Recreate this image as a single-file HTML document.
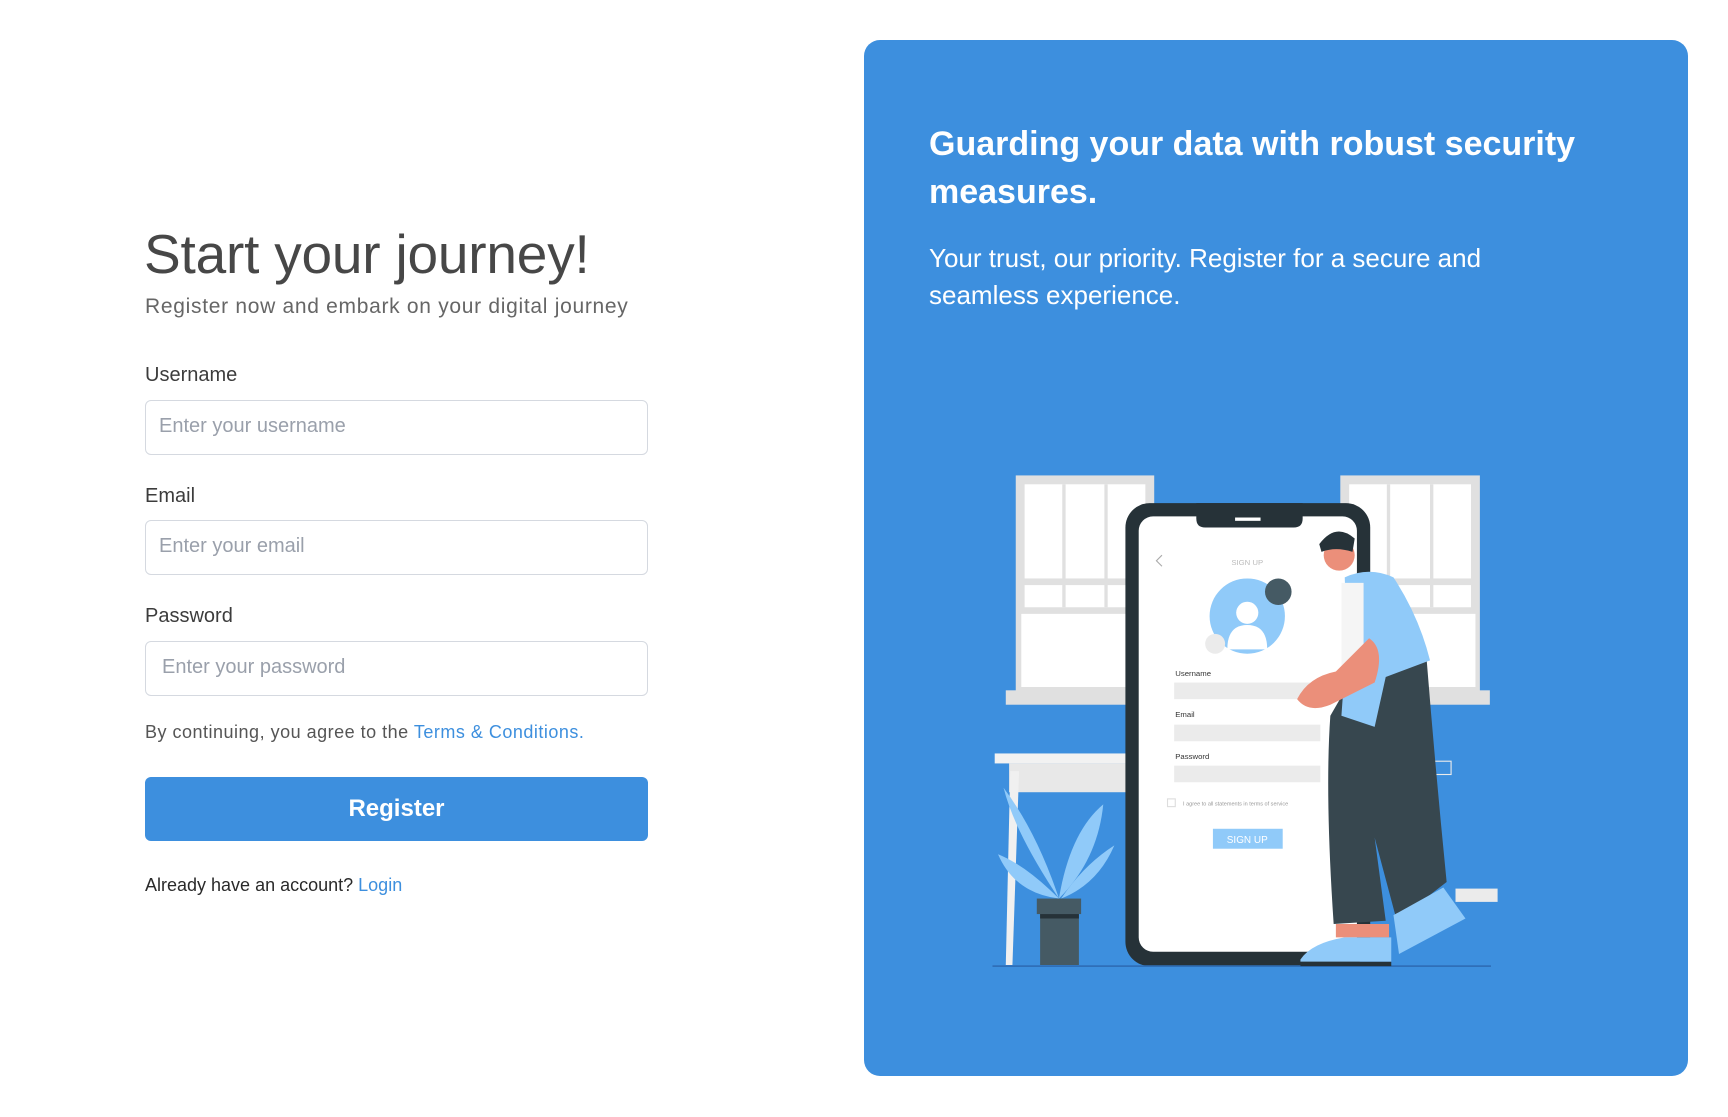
<!DOCTYPE html>
<html><head><meta charset="utf-8">
<style>
*{box-sizing:border-box;margin:0;padding:0}
body{width:1728px;height:1117px;background:#fff;font-family:"Liberation Sans",sans-serif;position:relative;overflow:hidden}
.a{position:absolute}
h1{position:absolute;left:144px;top:222px;font-size:55px;font-weight:400;color:#474747;letter-spacing:-0.2px}
.sub{left:145px;top:295px;font-size:21px;color:#666;letter-spacing:0.7px}
.lbl{left:145px;font-size:20px;color:#3c3c3c}
.inp{left:145px;width:503px;height:55px;border:1px solid #d5d9e0;border-radius:6px;font-size:20px;color:#9aa0ab;padding:14px 0 0 13px}
.terms{left:145px;top:722px;font-size:18px;color:#555;letter-spacing:0.5px}
.terms span,.log span{color:#3d8fde}
.btn{left:145px;top:777px;width:503px;height:64px;background:#3d8fde;border-radius:6px;color:#fff;font-size:24px;font-weight:700;text-align:center;line-height:64px}
.log{left:145px;top:875px;font-size:18px;color:#2a2a2a}
.panel{left:864px;top:40px;width:824px;height:1036px;background:#3d8fde;border-radius:16px}
.h2{left:929px;top:120px;width:700px;font-size:34px;font-weight:700;color:#fff;line-height:48px}
.p{left:929px;top:240px;width:620px;font-size:26px;color:#fff;line-height:37px}
</style></head><body>
<h1>Start your journey!</h1>
<div class="a sub">Register now and embark on your digital journey</div>
<div class="a lbl" style="top:364px">Username</div>
<div class="a inp" style="top:400px">Enter your username</div>
<div class="a lbl" style="top:485px">Email</div>
<div class="a inp" style="top:520px">Enter your email</div>
<div class="a lbl" style="top:605px">Password</div>
<div class="a inp" style="top:641px;padding-left:16px">Enter your password</div>
<div class="a terms">By continuing, you agree to the <span>Terms &amp; Conditions.</span></div>
<div class="a btn">Register</div>
<div class="a log">Already have an account? <span>Login</span></div>
<div class="a panel"></div>
<div class="a h2">Guarding your data with robust security measures.</div>
<div class="a p">Your trust, our priority. Register for a secure and seamless experience.</div>
<svg class="a" style="left:0;top:0" width="1728" height="1117" viewBox="4 4 1560 1008">
<rect x="921" y="433" width="125" height="197" fill="#e0e0e0"/>
<rect x="929" y="441" width="109" height="85" fill="#fff"/>
<rect x="929" y="532" width="109" height="20" fill="#fff"/>
<rect x="926" y="558" width="117" height="66" fill="#fff"/>
<rect x="963" y="441" width="3" height="111" fill="#e0e0e0"/><rect x="1001" y="441" width="3" height="111" fill="#e0e0e0"/>
<rect x="912" y="627" width="110" height="13" fill="#e0e0e0"/>
<rect x="1214" y="433" width="126" height="197" fill="#e0e0e0"/>
<rect x="1222" y="441" width="110" height="85" fill="#fff"/>
<rect x="1222" y="532" width="110" height="20" fill="#fff"/>
<rect x="1219" y="558" width="117" height="66" fill="#fff"/>
<rect x="1256" y="441" width="3" height="111" fill="#e0e0e0"/><rect x="1295" y="441" width="3" height="111" fill="#e0e0e0"/>
<rect x="1280" y="627" width="69" height="13" fill="#e0e0e0"/>
<rect x="1318" y="806" width="38" height="12" fill="#ebebeb"/>
<rect x="1276" y="691" width="38" height="12" fill="none" stroke="#ebebeb"/>
<rect x="902" y="684" width="120" height="9" fill="#f2f2f2"/>
<rect x="915" y="693" width="107" height="26" fill="#e8e8e8"/>
<polygon points="916,700 924,700 918,875 912,875" fill="#f0f0f0"/>
<rect x="1020" y="458" width="221" height="418" rx="22" fill="#263238"/>
<rect x="1032" y="470" width="197" height="393" rx="13" fill="#fff"/>
<path d="M1084 458 h96 v14 q0 8 -8 8 h-80 q-8 0 -8 -8z" fill="#263238"/>
<rect x="1119" y="471" width="23" height="3" fill="#fff"/>
<text x="1130" y="514" font-size="7" fill="#bbb" text-anchor="middle" font-family="Liberation Sans">SIGN UP</text>
<path d="M1053 505 l-5 5 l5 5" stroke="#aaa" fill="none"/>
<circle cx="1130" cy="560" r="34" fill="#90caf9"/>
<circle cx="1158" cy="538" r="12" fill="#455a64"/>
<circle cx="1101" cy="585" r="9" fill="#ebebeb"/>
<circle cx="1130" cy="557" r="10" fill="#fff"/>
<path d="M1112 590 q0 -22 18 -22 q18 0 18 22z" fill="#fff"/>
<text x="1065" y="614" font-size="7" fill="#333" font-family="Liberation Sans">Username</text>
<rect x="1064" y="620" width="132" height="15" fill="#ebebeb"/>
<text x="1065" y="651" font-size="7" fill="#333" font-family="Liberation Sans">Email</text>
<rect x="1064" y="658" width="132" height="15" fill="#ebebeb"/>
<text x="1065" y="689" font-size="7" fill="#333" font-family="Liberation Sans">Password</text>
<rect x="1064" y="695" width="132" height="15" fill="#ebebeb"/>
<rect x="1058" y="725" width="7" height="7" fill="none" stroke="#ddd"/>
<text x="1072" y="731" font-size="5" fill="#999" font-family="Liberation Sans">I agree to all statements in terms of service</text>
<rect x="1099" y="752" width="63" height="18" fill="#90caf9"/>
<text x="1130" y="765" font-size="9" fill="#fff" text-anchor="middle" font-family="Liberation Sans">SIGN UP</text>
<path d="M960 815 q-20 -60 -50 -100 q10 40 50 100z" fill="#90caf9"/>
<path d="M960 815 q10 -60 40 -85 q-5 50 -40 85z" fill="#90caf9"/>
<path d="M960 815 q-30 -30 -55 -40 q15 35 55 40z" fill="#90caf9"/>
<path d="M962 815 q20 -30 48 -48 q-15 35 -48 48z" fill="#90caf9"/>
<rect x="940" y="815" width="40" height="14" fill="#455a64"/>
<rect x="943" y="829" width="35" height="46" fill="#455a64"/>
<rect x="943" y="829" width="35" height="4" fill="#263238"/>
<line x1="900" y1="876" x2="1350" y2="876" stroke="#2f6fb8" stroke-width="1.5"/>
<path d="M1228 610 L1292 600 Q1300 700 1310 800 L1265 835 L1245 760 L1255 835 L1208 838 Q1200 720 1205 650z" fill="#37474f"/>
<path d="M1218 525 Q1240 515 1262 525 Q1285 560 1295 600 L1255 615 L1245 660 L1215 650 L1220 580z" fill="#90caf9"/>
<rect x="1215" y="530" width="20" height="80" fill="#f5f5f5"/>
<path d="M1240 580 q15 10 5 40 l-40 20 q-20 8 -30 -5 q10 -20 35 -25z" fill="#eb8f7a"/>
<circle cx="1213" cy="505" r="14" fill="#eb8f7a"/>
<path d="M1195 495 q15 -20 32 -5 l-2 12 q-15 -5 -28 0z" fill="#263238"/>
<path d="M1210 838 h48 v12 h-48z" fill="#eb8f7a"/>
<path d="M1178 870 q10 -15 40 -20 h42 v22 h-82z" fill="#90caf9"/>
<path d="M1262 830 l45 -25 l20 28 l-60 32z" fill="#90caf9"/>
<path d="M1178 872 h82 v4 h-82z" fill="#263238"/>
</svg>
</body></html>
